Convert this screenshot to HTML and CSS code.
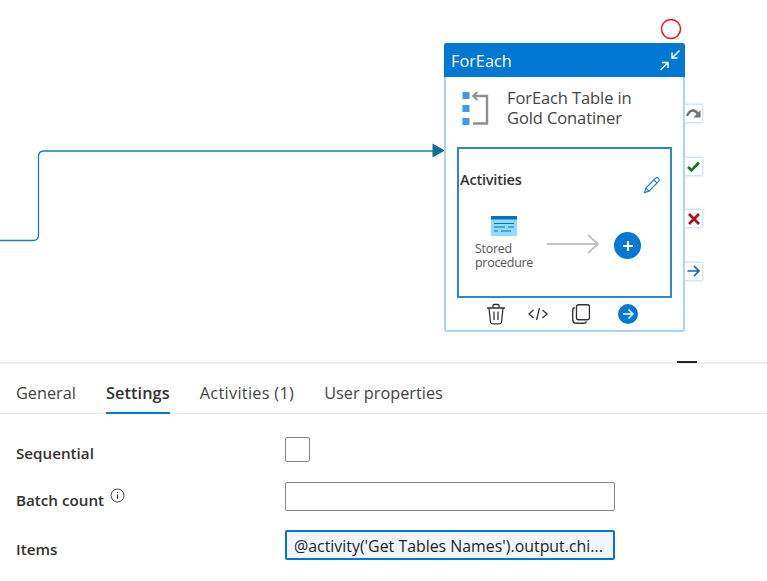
FILE: index.html
```html
<!DOCTYPE html>
<html lang="en">
<head>
<meta charset="utf-8">
<title>ForEach settings</title>
<link rel="stylesheet" href="styles.css">
</head>
<body>
<section class="canvas">
  <svg class="wire" width="445" height="250" viewBox="0 0 445 250">
    <path d="M0 240.5H33Q38.500 240.500 38.500 235V156.500Q38.500 151 44 151H434" fill="none" stroke="#1283ad" stroke-width="1.300"/>
    <path d="M432.500 143.500L445 150.500L432.500 157.500Z" fill="#0f6f93"/>
  </svg>
  <svg class="marker" width="22" height="22" viewBox="0 0 22 22"><circle cx="11" cy="11" r="9.500" fill="none" stroke="#e8141c" stroke-width="1.500"/></svg>
  <article class="node">
    <header class="node-head">
      <span class="node-type">ForEach</span>
      <svg width="24" height="24" viewBox="0 0 24 24" fill="none" stroke="#fff" stroke-width="1.500">
        <path d="M21.500 2.500L14 10M14 4.500V10H19.500"/>
        <path d="M2.500 22L10 14.500M4 14.500H10V20"/>
      </svg>
    </header>
    <div class="node-title">
      <svg class="node-icon" width="28" height="36" viewBox="0 0 28 36">
        <rect x="0.500" y="1" width="7" height="7" fill="#3c9ae8"/>
        <rect x="0.500" y="14" width="7" height="7" fill="#3c9ae8"/>
        <rect x="0.500" y="27" width="7" height="7" fill="#3c9ae8"/>
        <path d="M11 5H25V32.500H11" fill="none" stroke="#8f8f8f" stroke-width="2.400"/>
        <path d="M15.500 1L11 5L15.500 9" fill="none" stroke="#8f8f8f" stroke-width="1.800"/>
      </svg>
      <h2 class="node-name">ForEach Table in Gold Conatiner</h2>
    </div>
    <div class="activities">
      <div class="act-head">
        <h3 class="act-title">Activities</h3>
        <svg class="act-edit" width="18" height="18" viewBox="0 0 18 18" fill="none" stroke="#1f86d8" stroke-width="1.200"><path d="M1.500 16.500L2.800 12L12.500 2.300Q14 1 15.500 2.300Q17 3.800 15.700 5.400L6 15.200Z"/><path d="M11 4L14 7M2.800 12L6 15.200"/></svg>
      </div>
      <div class="act-flow">
        <div class="act-item">
          <svg width="26" height="20" viewBox="0 0 26 20">
            <rect width="26" height="20" fill="#8fdcfb"/>
            <rect width="26" height="3.500" fill="#0b6fc4"/>
            <path d="M3 7.500H23M3 11H14M17 11H23M3 15H7M10 15H20" stroke="#0b6fc4" stroke-width="1"/>
          </svg>
          <span class="act-label">Stored procedure</span>
        </div>
        <svg class="act-arrow" width="54" height="20" viewBox="0 0 54 20" fill="none" stroke="#c4c4c4" stroke-width="2"><path d="M0 10H51M41 1L51 10L41 19"/></svg>
        <span class="add-btn"><svg width="12" height="12" viewBox="0 0 12 12"><path d="M6 1V11M1 6H11" stroke="#fff" stroke-width="2.200"/></svg></span>
      </div>
    </div>
    <footer class="node-tools">
      <svg width="20" height="22" viewBox="0 0 20 22" fill="none" stroke="#333" stroke-width="1.300"><path d="M1 5H19M7 5V2.500Q7 1.500 8 1.500H12Q13 1.500 13 2.500V5M3 5L4.500 19Q4.700 20.800 6.500 20.800H13.500Q15.300 20.800 15.500 19L17 5M8 8.500V17M12 8.500V17"/></svg>
      <svg width="20" height="14" viewBox="0 0 20 14" fill="none" stroke="#333" stroke-width="1.300"><path d="M5.500 3L1 7L5.500 11M14.500 3L19 7L14.500 11M11.500 1L8.500 13"/></svg>
      <svg class="tool-copy" width="18" height="20" viewBox="0 0 18 20" fill="none" stroke="#333" stroke-width="1.400"><rect x="4.500" y="0.700" width="13" height="15" rx="2"/><path d="M2.800 3.500Q0.700 4 0.700 6V15.500Q0.700 19.300 4.500 19.300H12Q14 19.300 14.500 17.500"/></svg>
      <span class="go-btn"><svg width="12" height="12" viewBox="0 0 12 12" fill="none" stroke="#fff" stroke-width="1.500"><path d="M1 6H10.500M6.500 1.500L11 6L6.500 10.500"/></svg></span>
    </footer>
    <div class="ports">
      <span class="port"><svg width="15" height="11" viewBox="0 0 15 11" fill="none" stroke="#707070" stroke-width="2.400"><path d="M1 8Q3.500 2 7.500 2.500Q10.500 3 12.500 7"/><path d="M14.500 2V9.500H7.500Z" fill="#707070" stroke="none"/></svg></span>
      <span class="port"><svg width="13" height="11" viewBox="0 0 13 11" fill="none" stroke="#0d7a0d" stroke-width="2.600"><path d="M1 6L4.500 9.300L12 1.500"/></svg></span>
      <span class="port"><svg width="12" height="12" viewBox="0 0 12 12" fill="none" stroke="#b01116" stroke-width="2.800"><path d="M1 1L11 11M11 1L1 11"/></svg></span>
      <span class="port"><svg width="13" height="12" viewBox="0 0 13 12" fill="none" stroke="#0f62b8" stroke-width="1.600"><path d="M0.500 6H11.500M7 1L12 6L7 11"/></svg></span>
    </div>
  </article>
  <span class="handle"></span>
</section>
<section class="panel">
  <nav class="tabs">
    <span class="tab">General</span>
    <span class="tab tab-active">Settings</span>
    <span class="tab tab-count">Activities (1)</span>
    <span class="tab">User properties</span>
  </nav>
  <form class="form">
    <label class="field-label label-seq">Sequential</label>
    <span class="checkbox"></span>
    <label class="field-label label-batch">Batch count
      <svg class="info" width="15" height="15" viewBox="0 0 15 15" fill="none" stroke="#333" stroke-width="0.900"><circle cx="7.500" cy="7.500" r="6.500"/><path d="M7.500 6.500V11M7.500 4V5"/></svg>
    </label>
    <span class="text-input"></span>
    <label class="field-label label-items">Items</label>
    <span class="text-input text-input-active">@activity('Get Tables Names').output.chi...</span>
  </form>
</section>
</body>
</html>
```
FILE: styles.css
```css
* { box-sizing: border-box; }
html, body { margin: 0; height: 100%; }
body {
  background: #fff;
  font-family: "Open Sans", "Noto Sans", sans-serif;
  color: #323130;
  overflow: hidden;
}
h2, h3 { margin: 0; font-weight: 400; }

.canvas {
  position: relative;
  height: 362px;
}
.wire { position: absolute; left: 0; top: 0; }
.marker { position: absolute; left: 660px; top: 18px; }
.handle {
  position: absolute;
  left: 677px;
  top: 361px;
  width: 20px;
  height: 2px;
  background: #222;
}

.node {
  position: absolute;
  left: 444px;
  top: 43px;
  width: 241px;
  height: 289px;
  display: flex;
  flex-direction: column;
  border: 2px solid #a9d3f5;
  border-radius: 3px;
  background: #fff;
}
.node-head {
  height: 34px;
  flex: none;
  margin: -2px -2px 0;
  padding: 0 3px 0 7px;
  display: flex;
  align-items: center;
  justify-content: space-between;
  background: #0078d4;
  border-radius: 3px 3px 0 0;
  color: #fff;
}
.node-type { font-size: 16.300px; padding-top: 2px; }
.node-title {
  height: 59px;
  flex: none;
  display: flex;
  align-items: flex-start;
  gap: 17px;
  padding: 0 0 0 16px;
}
.node-icon { margin-top: 14px; }
.node-name {
  width: 146px;
  margin-top: 11px;
  font-size: 16.500px;
  line-height: 20px;
  letter-spacing: -0.1px;
  color: #444;
}
.activities {
  height: 151px;
  flex: none;
  margin: 11px 11px 0 11px;
  border: 2px solid #2f86cc;
  padding: 0 0 0 1px;
  display: flex;
  flex-direction: column;
}
.act-head {
  display: flex;
  align-items: flex-start;
  justify-content: space-between;
  padding: 21px 9px 0 0;
}
.act-edit { margin-top: 6px; }
.act-title {
  font-size: 14.500px;
  line-height: 20px;
  font-weight: 600;
  letter-spacing: -0.2px;
  color: #333;
}
.act-flow {
  display: flex;
  align-items: flex-start;
  padding: 22px 0 0 15px;
}
.act-item {
  width: 72px;
  display: flex;
  flex-direction: column;
  align-items: flex-start;
}
.act-item svg { margin: 0 0 0 16px; }
.act-label {
  margin-top: 6px;
  font-size: 12.500px;
  line-height: 14px;
  letter-spacing: -0.3px;
  color: #555;
}
.act-arrow { margin: 18px 0 0 0; }
.add-btn {
  margin: 16px 0 0 13px;
  width: 27px;
  height: 27px;
  border-radius: 50%;
  background: #0078d4;
  display: flex;
  align-items: center;
  justify-content: center;
}
.node-tools {
  flex: none;
  display: flex;
  align-items: center;
  gap: 22px;
  padding: 5px 0 0 40px;
}
.tool-copy { margin-left: 2px; }
.go-btn {
  margin-left: 6px;
  width: 20px;
  height: 20px;
  border-radius: 50%;
  background: #0078d4;
  display: flex;
  align-items: center;
  justify-content: center;
}

.ports {
  position: absolute;
  left: 239px;
  top: 60px;
  display: flex;
  flex-direction: column;
  gap: 35.500px;
}
.port {
  width: 17px;
  height: 17px;
  display: flex;
  align-items: center;
  justify-content: center;
  background: #fff;
  box-shadow: 0 0 2px 1px #bcdcf5;
}

.panel {
  border-top: 2px solid #ececec;
}
.tabs {
  height: 50px;
  display: flex;
  align-items: stretch;
  gap: 30px;
  padding: 0 16px;
  border-bottom: 1px solid #ececec;
}
.tab {
  padding-top: 18px;
  font-size: 16.300px;
  line-height: 22px;
  color: #444;
  margin-bottom: -1px;
}
.tab-active {
  font-weight: 600;
  letter-spacing: 0.1px;
  color: #323130;
  border-bottom: 2px solid #0078d4;
}
.tab-count { letter-spacing: 0.3px; }

.form {
  display: grid;
  grid-template-columns: 269px 330px;
  padding: 23px 0 0 16px;
  align-items: start;
}
.field-label {
  font-size: 15.200px;
  font-weight: 600;
  line-height: 20px;
  color: #323130;
}
.label-seq { padding-top: 6px; }
.label-batch { padding-top: 6px; }
.label-items { padding-top: 9px; }
.info { margin-left: 2px; vertical-align: 3px; }
.checkbox {
  width: 25px;
  height: 25px;
  border: 1px solid #8a8886;
  border-radius: 2px;
  margin-bottom: 20px;
}
.text-input {
  height: 29px;
  border: 1px solid #8a8886;
  border-radius: 2px;
  margin-bottom: 19px;
}
.text-input-active {
  height: 30px;
  border: 2px solid #0078d4;
  background: #f0f6ff;
  padding: 0 0 0 7px;
  font-size: 15.900px;
  line-height: 28px;
  color: #201f1e;
  white-space: nowrap;
  overflow: hidden;
}
```
